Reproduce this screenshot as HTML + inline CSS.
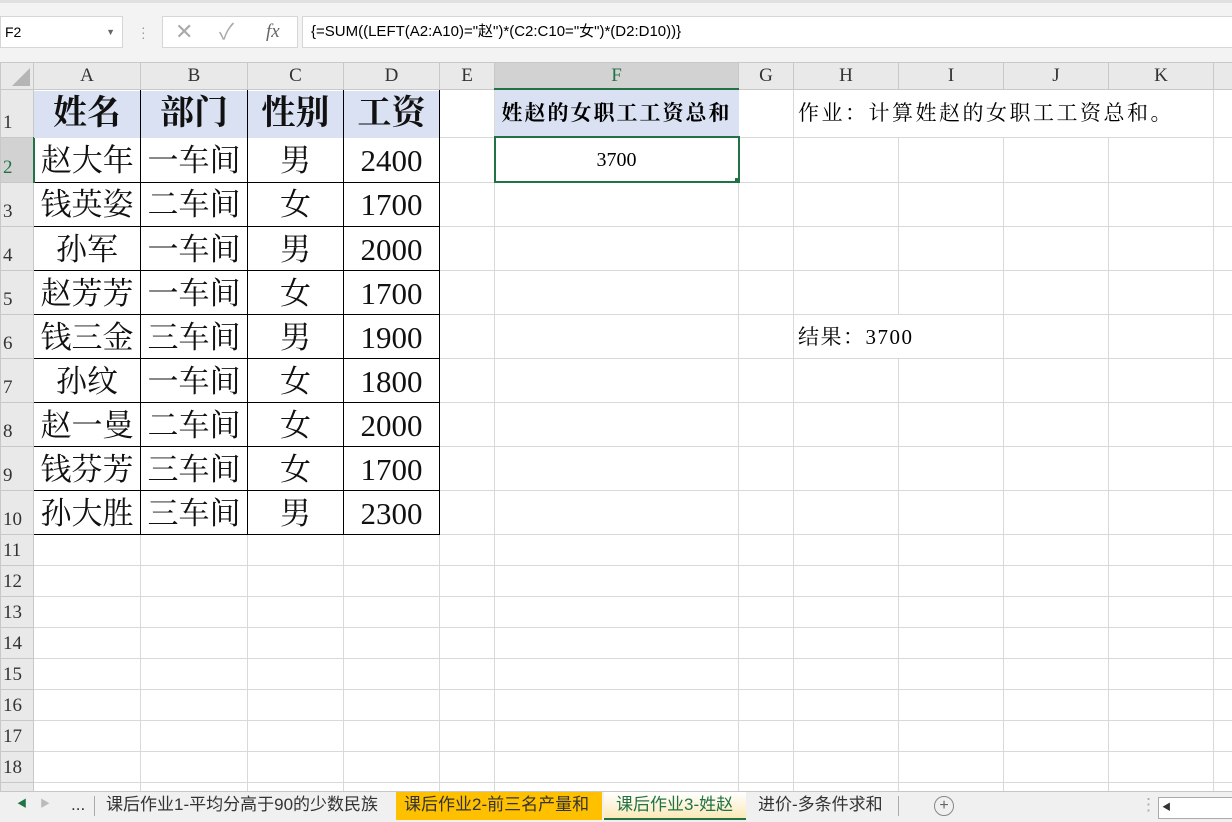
<!DOCTYPE html><html><head><meta charset="utf-8"><style>
html,body{margin:0;width:1232px;height:822px;overflow:hidden}
body{background:#fff;font-family:"Liberation Sans","Noto Sans CJK SC",sans-serif;position:relative}
.top{position:absolute;left:0;top:0;width:1232px;height:62px;background:#f3f3f3;border-top:3px solid #e0e0e0;box-sizing:border-box}
.box{position:absolute;background:#fff;border:1px solid #d6d6d6;box-sizing:border-box}
table{position:absolute;left:0;top:62px;border-collapse:collapse;table-layout:fixed;width:1253px}
td{border:1px solid #d9d9d9;padding:0;overflow:hidden;white-space:nowrap;text-align:center;font-family:"Liberation Serif","Noto Serif CJK SC",serif;line-height:20px}
tr.h td{background:#e9e9e9;height:25px;font-size:19px;color:#333;border-color:#c8c8c8}
td.rh{background:#e9e9e9;font-size:19px;color:#333;text-align:left;padding-left:2px;border-color:#c8c8c8;vertical-align:bottom;padding-bottom:4px;box-sizing:border-box}
tr.r1 td{height:46px}
tr.rd td{height:43px}
tr.rs td{height:30px}
.d{border:1px solid #000;font-size:31px;color:#111;line-height:34px;position:relative;top:1px}
.hd{background:#d9e1f2;font-size:34px;font-weight:bold;line-height:38px}
.tabs{position:absolute;left:0;top:791px;width:1232px;height:31px;background:#f0f0f0;border-top:1px solid #c6c6c6;box-sizing:border-box;font-size:17px;color:#333}
.tab{position:absolute;top:0;height:28px;line-height:26px}
</style></head><body>
<div class="top">
<div class="box" style="left:0;top:13px;width:123px;height:32px;font-size:14px;line-height:30px;padding-left:4px">F2<span style="position:absolute;right:7px;top:0;font-size:9px;color:#666">▼</span></div>
<div style="position:absolute;left:141px;top:22px;color:#999;font-size:14px;line-height:5px">·<br>·<br>·</div>
<div class="box" style="left:162px;top:13px;width:136px;height:32px;color:#aaa;font-size:22px;line-height:30px"><span style="position:absolute;left:12px">✕</span><span style="position:absolute;left:56px">✓</span><span style="position:absolute;left:103px;font-family:'Liberation Serif',serif;font-style:italic;font-size:19px;color:#666">fx</span></div>
<div class="box" style="left:302px;top:13px;width:940px;height:32px;font-size:15px;line-height:30px;padding-left:8px">{=SUM((LEFT(A2:A10)="赵")*(C2:C10="女")*(D2:D10))}</div>
</div>
<table>
<colgroup><col style="width:33px"><col style="width:107px"><col style="width:107px"><col style="width:96px"><col style="width:96px"><col style="width:55px"><col style="width:244px"><col style="width:55px"><col style="width:105px"><col style="width:105px"><col style="width:105px"><col style="width:105px"><col style="width:40px"></colgroup>
<tr class="h"><td style="position:relative"><div style="position:absolute;right:3px;bottom:3px;width:0;height:0;border-left:18px solid transparent;border-bottom:18px solid #b5b5b5"></div></td><td>A</td><td>B</td><td>C</td><td>D</td><td>E</td><td style="background:#d2d2d2;color:#217346;border-bottom:2px solid #217346">F</td><td>G</td><td>H</td><td>I</td><td>J</td><td>K</td><td></td></tr>
<tr class="r1"><td class="rh">1</td><td class="d hd">姓名</td><td class="d hd">部门</td><td class="d hd">性别</td><td class="d hd">工资</td><td></td><td style="background:#d9e1f2;font-weight:bold;font-size:21px;letter-spacing:2px;border-color:#d9e1f2">姓赵的女职工工资总和</td><td></td><td colspan="4" style="text-align:left;font-size:21px;letter-spacing:2.5px;padding-left:4px;border-right:none">作业：计算姓赵的女职工工资总和。</td><td></td></tr>
<tr class="rd"><td class="rh" style="background:#d2d2d2;color:#217346;border-right:2px solid #217346">2</td><td class="d">赵大年</td><td class="d">一车间</td><td class="d">男</td><td class="d">2400</td><td></td><td style="border:2px solid #217346;font-size:20px;position:relative">3700<div style="position:absolute;right:-3px;bottom:-3px;width:6px;height:6px;background:#217346"></div></td><td></td><td></td><td></td><td></td><td></td><td></td></tr>
<tr class="rd"><td class="rh">3</td><td class="d">钱英姿</td><td class="d">二车间</td><td class="d">女</td><td class="d">1700</td><td></td><td></td><td></td><td></td><td></td><td></td><td></td><td></td></tr>
<tr class="rd"><td class="rh">4</td><td class="d">孙军</td><td class="d">一车间</td><td class="d">男</td><td class="d">2000</td><td></td><td></td><td></td><td></td><td></td><td></td><td></td><td></td></tr>
<tr class="rd"><td class="rh">5</td><td class="d">赵芳芳</td><td class="d">一车间</td><td class="d">女</td><td class="d">1700</td><td></td><td></td><td></td><td></td><td></td><td></td><td></td><td></td></tr>
<tr class="rd"><td class="rh">6</td><td class="d">钱三金</td><td class="d">三车间</td><td class="d">男</td><td class="d">1900</td><td></td><td></td><td></td><td colspan="2" style="text-align:left;font-size:21px;letter-spacing:1.5px;padding-left:4px">结果：3700</td><td></td><td></td><td></td></tr>
<tr class="rd"><td class="rh">7</td><td class="d">孙纹</td><td class="d">一车间</td><td class="d">女</td><td class="d">1800</td><td></td><td></td><td></td><td></td><td></td><td></td><td></td><td></td></tr>
<tr class="rd"><td class="rh">8</td><td class="d">赵一曼</td><td class="d">二车间</td><td class="d">女</td><td class="d">2000</td><td></td><td></td><td></td><td></td><td></td><td></td><td></td><td></td></tr>
<tr class="rd"><td class="rh">9</td><td class="d">钱芬芳</td><td class="d">三车间</td><td class="d">女</td><td class="d">1700</td><td></td><td></td><td></td><td></td><td></td><td></td><td></td><td></td></tr>
<tr class="rd"><td class="rh">10</td><td class="d">孙大胜</td><td class="d">三车间</td><td class="d">男</td><td class="d">2300</td><td></td><td></td><td></td><td></td><td></td><td></td><td></td><td></td></tr>
<tr class="rs"><td class="rh">11</td><td></td><td></td><td></td><td></td><td></td><td></td><td></td><td></td><td></td><td></td><td></td><td></td></tr>
<tr class="rs"><td class="rh">12</td><td></td><td></td><td></td><td></td><td></td><td></td><td></td><td></td><td></td><td></td><td></td><td></td></tr>
<tr class="rs"><td class="rh">13</td><td></td><td></td><td></td><td></td><td></td><td></td><td></td><td></td><td></td><td></td><td></td><td></td></tr>
<tr class="rs"><td class="rh">14</td><td></td><td></td><td></td><td></td><td></td><td></td><td></td><td></td><td></td><td></td><td></td><td></td></tr>
<tr class="rs"><td class="rh">15</td><td></td><td></td><td></td><td></td><td></td><td></td><td></td><td></td><td></td><td></td><td></td><td></td></tr>
<tr class="rs"><td class="rh">16</td><td></td><td></td><td></td><td></td><td></td><td></td><td></td><td></td><td></td><td></td><td></td><td></td></tr>
<tr class="rs"><td class="rh">17</td><td></td><td></td><td></td><td></td><td></td><td></td><td></td><td></td><td></td><td></td><td></td><td></td></tr>
<tr class="rs"><td class="rh">18</td><td></td><td></td><td></td><td></td><td></td><td></td><td></td><td></td><td></td><td></td><td></td><td></td></tr>
<tr class="rs"><td class="rh">19</td><td></td><td></td><td></td><td></td><td></td><td></td><td></td><td></td><td></td><td></td><td></td><td></td></tr>
</table>
<div class="tabs">
<span class="tab" style="left:17px;color:#217346;font-size:10px">◀</span>
<span class="tab" style="left:40px;color:#bbb;font-size:10px">▶</span>
<span class="tab" style="left:71px">...</span>
<span class="tab" style="left:94px;border-left:1px solid #aaa;height:20px;top:4px"></span>
<span class="tab" style="left:106px">课后作业1-平均分高于90的少数民族</span>
<span class="tab" style="left:396px;width:206px;background:#ffc000;padding-left:8px;box-sizing:border-box">课后作业2-前三名产量和</span>
<span class="tab" style="left:604px;width:142px;background:linear-gradient(#fff,#fbe9b7);color:#217346;padding-left:12px;box-sizing:border-box;border-bottom:2px solid #217346">课后作业3-姓赵</span>
<span class="tab" style="left:758px">进价-多条件求和</span>
<span class="tab" style="left:898px;border-left:1px solid #aaa;height:20px;top:4px"></span>
<span class="tab" style="left:934px;top:4px;width:18px;height:18px;border:1px solid #888;border-radius:50%;line-height:17px;text-align:center;color:#666;font-size:16px">+</span>
<span class="tab" style="left:1140px;color:#aaa">⋮</span>
<span class="tab" style="left:1158px;top:5px;width:80px;height:20px;background:#fff;border:1px solid #aaa;font-size:9px;line-height:18px;padding-left:3px">◀</span>
</div>
</body></html>
